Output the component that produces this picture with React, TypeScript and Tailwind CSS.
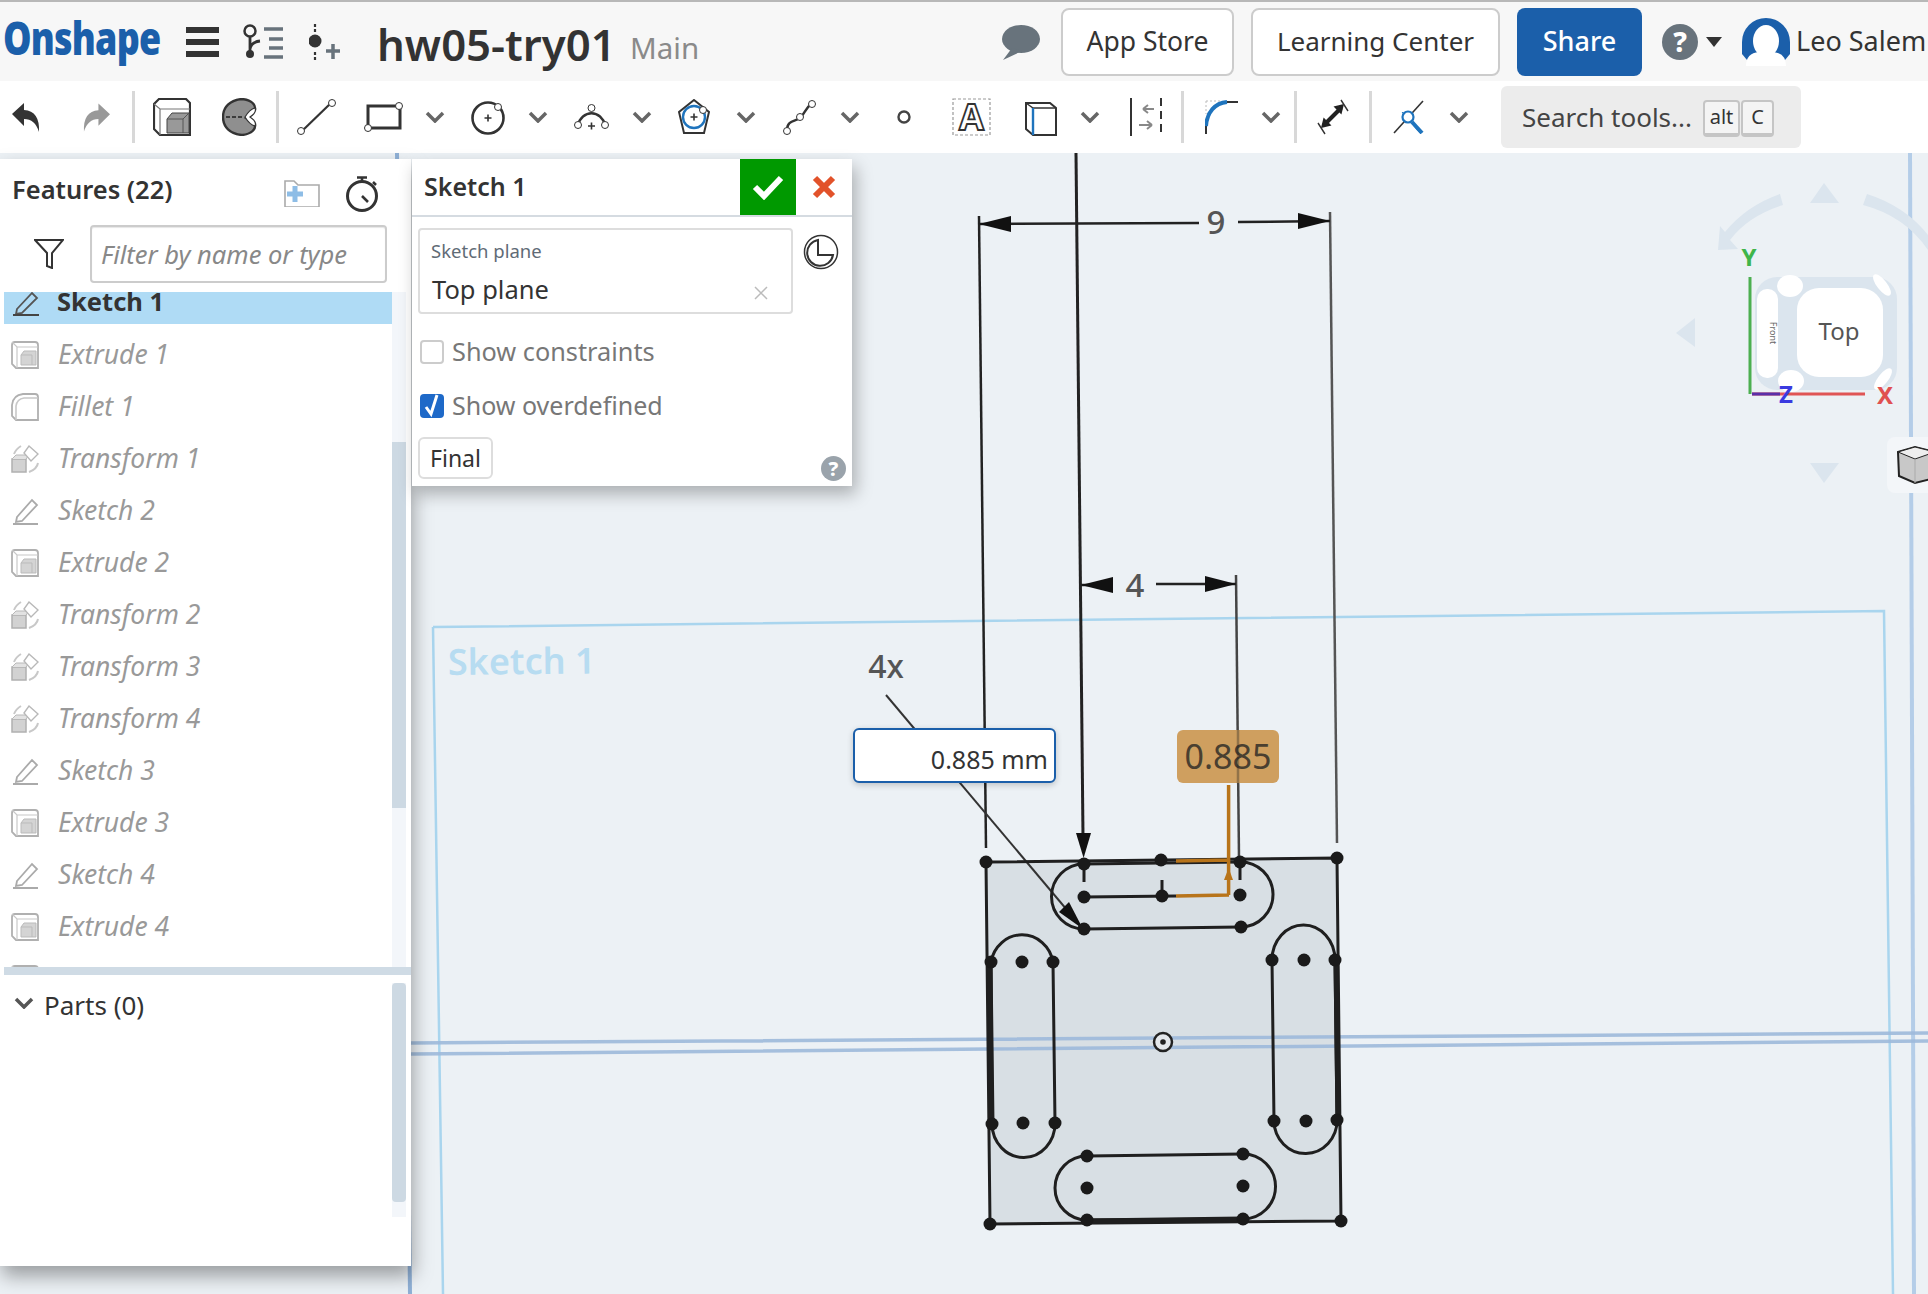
import React from "react";

const features = [
  { label: "Extrude 1", icon: "extrude" },
  { label: "Fillet 1", icon: "fillet" },
  { label: "Transform 1", icon: "transform" },
  { label: "Sketch 2", icon: "sketch" },
  { label: "Extrude 2", icon: "extrude" },
  { label: "Transform 2", icon: "transform" },
  { label: "Transform 3", icon: "transform" },
  { label: "Transform 4", icon: "transform" },
  { label: "Sketch 3", icon: "sketch" },
  { label: "Extrude 3", icon: "extrude" },
  { label: "Sketch 4", icon: "sketch" },
  { label: "Extrude 4", icon: "extrude" },
];

// white handle on the sketch tool icons
const Dot = ({ x, y, r = 3.5 }: { x: number; y: number; r?: number }) => (
  <circle cx={x} cy={y} r={r} fill="#fff" stroke="#333" strokeWidth="1" />
);

const Plus = ({ x, y }: { x: number; y: number }) => (
  <path d={`M${x - 3.5} ${y}H${x + 3.5}M${x} ${y - 3.5}V${y + 3.5}`} stroke="#333" strokeWidth="1.6" fill="none" />
);

const Chevron = ({ className }: { className: string }) => (
  <svg viewBox="0 0 20 12" className={`w-[20px] h-[12px] shrink-0 ${className}`}>
    <path d="M2 2L10 10L18 2" fill="none" stroke="#666" strokeWidth="3.5" />
  </svg>
);

const Sep = ({ className }: { className: string }) => (
  <div className={`w-[3px] h-[52px] bg-[#d8d8d8] shrink-0 ${className}`} />
);

const RowIcon = ({ kind }: { kind: string }) => {
  if (kind === "sketch-dark") {
    return (
      <svg viewBox="0 0 28 28" className="w-[28px] h-[28px]">
        <path d="M5 21L20 5L25 10L10 25L4 26Z" fill="none" stroke="#555" strokeWidth="1.8" />
        <path d="M1 27H27" stroke="#444" strokeWidth="2" />
      </svg>
    );
  }
  if (kind === "sketch") {
    return (
      <svg viewBox="0 0 28 28" className="w-[28px] h-[28px]">
        <path d="M6 20L21 3L26 8L11 24L5 25Z" fill="none" stroke="#aaa" strokeWidth="1.8" />
        <path d="M2 27H27" stroke="#aaa" strokeWidth="2" />
      </svg>
    );
  }
  if (kind === "fillet") {
    return (
      <svg viewBox="0 0 28 28" className="w-[28px] h-[28px]">
        <path d="M1 12Q2 2 12 1H24Q27 1 27 4V27H5L1 23Z" fill="none" stroke="#b0b0b0" strokeWidth="1.8" />
        <path d="M5 27V13Q6 6 13 5L27 5" fill="none" stroke="#c8c8c8" strokeWidth="1.6" />
      </svg>
    );
  }
  if (kind === "transform") {
    return (
      <svg viewBox="0 0 28 28" className="w-[28px] h-[28px]">
        <rect x="1" y="14" width="14" height="13" fill="#d2d2d2" stroke="#b0b0b0" strokeWidth="1.5" />
        <path d="M1 14L5 10H18L15 14" fill="#e2e2e2" stroke="#b8b8b8" strokeWidth="1" />
        <path d="M18 1L27 9L20 16L13 8Z" fill="#fff" stroke="#b8b8b8" strokeWidth="1.4" />
        <path d="M3 9Q5 4 10 1M27 18Q26 24 18 27" fill="none" stroke="#c8c8c8" strokeWidth="2" />
      </svg>
    );
  }
  return (
    <svg viewBox="0 0 28 28" className="w-[28px] h-[28px]">
      <path d="M1 4Q1 1 4 1H24Q27 1 27 4V27H5L1 23Z" fill="none" stroke="#b0b0b0" strokeWidth="1.8" />
      <path d="M1 1L6 6H27M6 6V27" fill="none" stroke="#c8c8c8" strokeWidth="1.2" />
      <path d="M10 14L13 10H25V24H10Z" fill="#d4d4d4" stroke="#bbb" strokeWidth="1" />
      <path d="M10 14H21V24" fill="none" stroke="#bbb" strokeWidth="1" />
    </svg>
  );
};

const Header = () => (
  <header className="h-[81px] shrink-0 bg-[#f7f7f7] border-t-2 border-[#b8b8b8] flex items-center overflow-hidden whitespace-nowrap">
    <div className="w-[183px] shrink-0 pl-[3px] -mt-[8px]">
      <span className="inline-block origin-left scale-x-[0.78] text-[46px] leading-none font-extrabold text-[#1b5faa] tracking-[-1px] [font-family:'Open_Sans',sans-serif]">
        Onshape
      </span>
    </div>
    <div className="w-[33px] h-[30px] ml-[3px] shrink-0 flex flex-col justify-between">
      <div className="h-[6px] bg-[#333]" />
      <div className="h-[6px] bg-[#333]" />
      <div className="h-[6px] bg-[#333]" />
    </div>
    <svg viewBox="0 0 41 35" className="w-[41px] h-[35px] ml-[23px] shrink-0">
      <circle cx="8" cy="7" r="5.5" fill="none" stroke="#333" strokeWidth="2.5" />
      <path d="M8 13V30M8 25Q9 18 18 17" fill="none" stroke="#333" strokeWidth="2.8" />
      <circle cx="8" cy="30" r="4" fill="#333" />
      <path d="M22 5H41M27 15H41M27 24H41M22 33H41" stroke="#68737c" strokeWidth="3.5" />
    </svg>
    <svg viewBox="0 0 31 36" className="w-[31px] h-[36px] ml-[26px] shrink-0">
      <path d="M6 0V8M6 28V36" stroke="#333" strokeWidth="2.2" strokeDasharray="3 2" />
      <circle cx="6" cy="17" r="6.5" fill="#333" />
      <path d="M17 27H31M24 20V35" stroke="#68737c" strokeWidth="3.5" />
    </svg>
    <div className="ml-[37px] text-[43.7px] leading-none font-semibold text-[#333] mt-[6px] w-[253px] shrink-0">hw05-try01</div>
    <div className="text-[29.5px] leading-none text-[#8a8a8a] mt-[12px] w-[370px] shrink-0">Main</div>
    <svg viewBox="0 0 40 36" className="w-[40px] h-[36px] shrink-0">
      <ellipse cx="21" cy="15" rx="19" ry="14" fill="#68737c" />
      <path d="M12 24L3 36L22 27Z" fill="#68737c" />
    </svg>
    <button className="ml-[21px] w-[173px] h-[68px] shrink-0 bg-white border-2 border-[#ccc] rounded-lg text-[26.5px] text-[#333]">App Store</button>
    <button className="ml-[17px] w-[249px] h-[68px] shrink-0 bg-white border-2 border-[#ccc] rounded-lg text-[26px] text-[#333]">Learning Center</button>
    <button className="ml-[17px] w-[125px] h-[68px] shrink-0 bg-[#1b5faa] rounded-lg text-[27px] font-medium text-white">Share</button>
    <svg viewBox="0 0 36 36" className="w-[36px] h-[36px] ml-[20px] shrink-0">
      <circle cx="18" cy="18" r="18" fill="#68737c" />
      <text x="18" y="28" textAnchor="middle" fontSize="28" fontWeight="800" fill="#fff">?</text>
    </svg>
    <svg viewBox="0 0 16 10" className="w-[16px] h-[10px] ml-[8px] shrink-0">
      <path d="M0 0H16L8 10Z" fill="#333" />
    </svg>
    <svg viewBox="0 0 48 48" className="w-[48px] h-[48px] ml-[20px] shrink-0">
      <path d="M0 24A24 24 0 0 1 48 24V36L38 48H10L0 36Z" fill="#1b5faa" />
      <ellipse cx="24" cy="23" rx="13" ry="16" fill="#fff" />
      <path d="M4 48Q4 35 17 34H31Q44 35 44 48Z" fill="#fff" />
    </svg>
    <div className="ml-[6px] text-[27px] text-[#333] shrink-0">Leo Salem</div>
  </header>
);

const Toolbar = () => (
  <div className="h-[72px] shrink-0 bg-white flex items-center pl-[12px] overflow-hidden">
    <svg viewBox="0 0 28 29" className="w-[28px] h-[29px] shrink-0">
      <path d="M0 11L12 0V7Q28 8 27 29Q23 16 12 16V23Z" fill="#333" />
    </svg>
    <svg viewBox="0 0 28 29" className="w-[27px] h-[29px] ml-[43px] shrink-0">
      <path d="M28 11L16 0V7Q0 8 1 29Q5 16 16 16V23Z" fill="#999" />
    </svg>
    <Sep className="ml-[22px]" />
    <svg viewBox="0 0 38 38" className="w-[38px] h-[38px] ml-[18px] shrink-0">
      <path d="M1 6L6 1H33L37 5V37H7L1 31Z" fill="#fff" stroke="#333" strokeWidth="2.2" />
      <path d="M1 6L7 11H37M7 11V37" fill="none" stroke="#777" strokeWidth="1.2" />
      <path d="M14 21L19 15H36V35H14Z" fill="#999" stroke="#444" strokeWidth="1" />
      <path d="M14 21H30L36 15M30 21V35" fill="none" stroke="#555" strokeWidth="1" />
    </svg>
    <svg viewBox="0 0 35 38" className="w-[35px] h-[38px] ml-[31px] shrink-0">
      <path d="M20 1C8 2 1 9 1 19C1 29 8 36 20 37C30 36 34 31 33 26C30 24 27 22 24 20C27 18 30 15 33 12C34 7 30 2 20 1Z" fill="#8f8f8f" stroke="#333" strokeWidth="2.4" />
      <path d="M33 10C29 11 26 14 23 19C26 24 29 27 33 28C35 24 31 21 28 19C31 17 35 14 33 10Z" fill="#fff" stroke="#333" strokeWidth="1.2" />
      <path d="M4 19H22" stroke="#222" strokeWidth="1.6" strokeDasharray="4 2" />
    </svg>
    <Sep className="ml-[19px]" />
    <svg viewBox="0 0 41 38" className="w-[41px] h-[38px] ml-[17px] shrink-0">
      <path d="M5 34L36 4" stroke="#333" strokeWidth="2.2" />
      <Dot x={5} y={33} />
      <Dot x={36} y={5} />
    </svg>
    <svg viewBox="0 0 40 30" className="w-[40px] h-[30px] ml-[27px] shrink-0">
      <rect x="4" y="4" width="32" height="22" fill="none" stroke="#333" strokeWidth="3" />
      <Dot x={35} y={4} />
      <Dot x={4} y={26} />
    </svg>
    <Chevron className="ml-[21px]" />
    <svg viewBox="0 0 34 36" className="w-[34px] h-[36px] ml-[26px] shrink-0">
      <circle cx="17" cy="19" r="15.5" fill="none" stroke="#333" strokeWidth="2.6" />
      <Plus x={17} y={19} />
      <Dot x={27} y={8} />
    </svg>
    <Chevron className="ml-[23px]" />
    <svg viewBox="0 0 35 32" className="w-[35px] h-[32px] ml-[26px] shrink-0">
      <path d="M4 24A14 16 0 0 1 31 24" fill="none" stroke="#333" strokeWidth="2.4" />
      <Dot x={4} y={24} />
      <Dot x={17.5} y={7} />
      <Dot x={31} y={24} />
      <Plus x={17.5} y={25} />
    </svg>
    <Chevron className="ml-[23px]" />
    <svg viewBox="0 0 32 36" className="w-[32px] h-[36px] ml-[26px] shrink-0">
      <path d="M16 1L31 13L26 34H6L1 13Z" fill="none" stroke="#333" strokeWidth="2" />
      <circle cx="16" cy="18" r="11" fill="none" stroke="#1f74bd" strokeWidth="2.4" />
      <Plus x={16} y={18} />
      <Dot x={25} y={11} />
    </svg>
    <Chevron className="ml-[26px]" />
    <svg viewBox="0 0 34 36" className="w-[34px] h-[36px] ml-[27px] shrink-0">
      <path d="M4 31C4 20 14 23 18 18C22 14 22 10 29 4" fill="none" stroke="#333" strokeWidth="2.4" />
      <Dot x={4} y={32} />
      <Dot x={17} y={18} />
      <Dot x={29} y={5} />
    </svg>
    <Chevron className="ml-[23px]" />
    <svg viewBox="0 0 14 14" className="w-[14px] h-[14px] ml-[37px] shrink-0">
      <circle cx="7" cy="7" r="5.5" fill="none" stroke="#444" strokeWidth="2.4" />
    </svg>
    <svg viewBox="0 0 39 38" className="w-[39px] h-[38px] ml-[41px] shrink-0 overflow-visible">
      <rect x="1" y="1" width="37" height="36" fill="none" stroke="#999" strokeWidth="1.2" strokeDasharray="3 2" />
      <text x="19.5" y="32" textAnchor="middle" fontSize="36" fontWeight="700" fill="#fff" stroke="#333" strokeWidth="1.8">A</text>
    </svg>
    <svg viewBox="0 0 32 38" className="w-[32px] h-[38px] ml-[34px] shrink-0">
      <path d="M1 5H25L31 10V37H8L1 31Z" fill="#fff" stroke="#333" strokeWidth="2" />
      <path d="M1 5L8 10H31" fill="none" stroke="#333" strokeWidth="1.4" />
      <path d="M8 10V37" stroke="#1f74bd" strokeWidth="2.4" />
    </svg>
    <Chevron className="ml-[23px]" />
    <svg viewBox="0 0 32 38" className="w-[32px] h-[38px] ml-[30px] shrink-0">
      <path d="M1 0V38" stroke="#333" strokeWidth="2" />
      <path d="M31 0V38" stroke="#333" strokeWidth="2" strokeDasharray="8 5" />
      <path d="M24 11H13M13 11L18 7M13 11L18 15" fill="none" stroke="#888" strokeWidth="2" />
      <path d="M9 27H22M22 27L17 23M22 27L17 31" fill="none" stroke="#888" strokeWidth="2" />
    </svg>
    <Sep className="ml-[19px]" />
    <svg viewBox="0 0 33 34" className="w-[33px] h-[34px] ml-[21px] shrink-0">
      <path d="M1 1H15M1 1V14" fill="none" stroke="#bbb" strokeWidth="1" strokeDasharray="2 2" />
      <path d="M1 34V26" stroke="#333" strokeWidth="2" />
      <path d="M1 26C2 12 10 3 22 2" fill="none" stroke="#1f74bd" strokeWidth="4" />
      <path d="M22 2H33" stroke="#333" strokeWidth="2" />
    </svg>
    <Chevron className="ml-[23px]" />
    <Sep className="ml-[13px]" />
    <svg viewBox="0 0 32 36" className="w-[32px] h-[36px] ml-[20px] shrink-0">
      <path d="M8 25L24 9" stroke="#222" strokeWidth="4" />
      <path d="M26 6L18 8L24 14ZM5 28L13 26L7 20Z" fill="#222" stroke="#222" strokeWidth="1.5" />
      <path d="M24 1L31 12M1 24L8 35" stroke="#333" strokeWidth="1.4" />
    </svg>
    <Sep className="ml-[20px]" />
    <svg viewBox="0 0 31 34" className="w-[31px] h-[34px] ml-[21px] shrink-0">
      <path d="M30 1L1 33" stroke="#333" strokeWidth="1.6" />
      <path d="M9 12L27 33" stroke="#1f74bd" strokeWidth="1" />
      <circle cx="15" cy="17" r="5.5" fill="#fff" stroke="#1f74bd" strokeWidth="2.2" />
      <path d="M19 22L29 33" stroke="#1f74bd" strokeWidth="4" />
    </svg>
    <Chevron className="ml-[25px]" />
    <div className="ml-[32px] w-[300px] h-[62px] shrink-0 bg-[#ececec] rounded-md flex items-center pl-[21px]">
      <span className="text-[26px] text-[#444] w-[181px] shrink-0 whitespace-nowrap">Search tools...</span>
      <span className="w-[37px] h-[37px] mt-[2px] flex items-center justify-center border-2 border-b-[4px] border-[#c5c5c5] rounded bg-[#f4f4f4] text-[20px] text-[#333]">alt</span>
      <span className="w-[33px] h-[37px] mt-[2px] ml-[1px] flex items-center justify-center border-2 border-b-[4px] border-[#c5c5c5] rounded bg-[#f4f4f4] text-[20px] text-[#333]">C</span>
    </div>
  </div>
);

const FeaturePanel = () => (
  <aside className="relative w-[411px] h-[1107px] mt-[6px] shrink-0 bg-white shadow-[2px_10px_18px_rgba(0,0,0,0.35)] flex flex-col">
    <div className="h-[66px] shrink-0 flex items-center pl-[12px]">
      <span className="text-[25.5px] font-semibold text-[#333] w-[272px] -mt-[5px]">Features (22)</span>
      <svg viewBox="0 0 36 27" className="w-[36px] h-[27px] mt-[3px] shrink-0">
        <path d="M10 1H1V27H35V5H14Z" fill="none" stroke="#aaa" strokeWidth="1.6" />
        <path d="M11 6V22M3 14H19" stroke="#8ebde6" strokeWidth="5" />
      </svg>
      <svg viewBox="0 0 32 36" className="w-[32px] h-[36px] ml-[26px] mt-[3px] shrink-0">
        <circle cx="16" cy="20" r="14.5" fill="none" stroke="#333" strokeWidth="3" />
        <path d="M11 1.5H21M16 2V6M27 6L30 9M16 20L22 26" fill="none" stroke="#333" strokeWidth="2.6" />
      </svg>
    </div>
    <div className="h-[58px] shrink-0 flex items-center">
      <svg viewBox="0 0 30 30" className="w-[30px] h-[30px] ml-[34px] shrink-0">
        <path d="M1 1H29L18 14V29L13 27V14Z" fill="none" stroke="#333" strokeWidth="2" />
      </svg>
      <div className="ml-[26px] w-[297px] h-[58px] border-2 border-[#ccc] rounded flex items-center pl-[9px] text-[25.5px] italic text-[#888] shadow-[inset_0_1px_1px_rgba(0,0,0,0.1)]">
        Filter by name or type
      </div>
    </div>
    <div className="mt-[9px] h-[675px] shrink-0 flex overflow-hidden">
      <div className="w-[392px] shrink-0">
        <div className="-mt-[16px] ml-[4px] h-[48px] mb-[4px] pt-[3px] bg-[#afdbf5] flex items-center pl-[8px]">
          <RowIcon kind="sketch-dark" />
          <span className="ml-[17px] text-[25.5px] font-bold text-[#333]">Sketch 1</span>
        </div>
        {features.map((f) => (
          <div key={f.label} className="ml-[4px] h-[48px] mb-[4px] pt-[5px] flex items-center pl-[7px]">
            <RowIcon kind={f.icon} />
            <span className="ml-[19px] text-[26.5px] italic text-[#999]">{f.label}</span>
          </div>
        ))}
        {/* next row, only the top of its icon shows above the divider */}
        <div className="ml-[4px] h-[48px] pt-[5px] flex items-center pl-[7px]">
          <RowIcon kind="extrude" />
        </div>
      </div>
      <div className="w-[14px] h-full bg-[#f3f6fa] pt-[150px] pb-[159px]">
        <div className="h-full bg-[#cdd9e3]" />
      </div>
    </div>
    <div className="h-[8px] ml-[4px] shrink-0 bg-[#cfdbe5]" />
    <div className="flex-1 flex">
      <div className="w-[392px] shrink-0 flex items-start pl-[14px] pt-[11px]">
        <svg viewBox="0 0 20 12" className="w-[20px] h-[12px] mt-[11px] shrink-0">
          <path d="M2 2L10 10L18 2" fill="none" stroke="#555" strokeWidth="3.5" />
        </svg>
        <span className="ml-[10px] text-[26px] text-[#333]">Parts (0)</span>
      </div>
      <div className="w-[14px] mt-[8px] h-[234px] bg-[#f3f6fa]">
        <div className="h-[219px] rounded bg-[#cdd9e3]" />
      </div>
    </div>
  </aside>
);

const SketchDialog = () => (
  <section className="w-[440px] h-[327px] ml-[1px] mt-[6px] shrink-0 bg-white shadow-[4px_8px_16px_rgba(0,0,0,0.28)] relative">
    <div className="h-[58px] border-b-2 border-[#d5dbe1] flex items-start">
      <div className="h-[56px] w-[328px] flex items-center pl-[12px] text-[25px] font-semibold text-[#333]">Sketch 1</div>
      <div className="w-[56px] h-[56px] bg-[#009900] flex items-center justify-center">
        <svg viewBox="0 0 32 26" className="w-[32px] h-[26px]">
          <path d="M3 13L12 22L29 4" fill="none" stroke="#fff" strokeWidth="6" />
        </svg>
      </div>
      <div className="w-[56px] h-[56px] flex items-center justify-center">
        <svg viewBox="0 0 24 24" className="w-[24px] h-[24px]">
          <path d="M3 3L21 21M21 3L3 21" fill="none" stroke="#e2522a" strokeWidth="6" />
        </svg>
      </div>
    </div>
    <div className="flex mt-[11px] ml-[6px]">
      <div className="relative w-[375px] h-[86px] border-2 border-[#ddd] rounded pl-[11px]">
        <div className="text-[18.5px] text-[#5f6b76] mt-[9px] leading-[24px]">Sketch plane</div>
        <div className="text-[25.5px] text-[#333] mt-[9px] ml-[1px] leading-[34px]">Top plane</div>
        <svg viewBox="0 0 14 14" className="absolute right-[23px] top-[56px] w-[14px] h-[14px]">
          <path d="M1 1L13 13M13 1L1 13" stroke="#bbb" strokeWidth="1.5" />
        </svg>
      </div>
      <svg viewBox="0 0 36 36" className="w-[36px] h-[36px] ml-[10px] mt-[6px] shrink-0">
        <circle cx="18" cy="18" r="16.5" fill="none" stroke="#333" strokeWidth="1.5" />
        <path d="M15 6A13 13 0 1 0 30 21H15Z" fill="none" stroke="#333" strokeWidth="2" />
      </svg>
    </div>
    <div className="flex items-center h-[24px] mt-[26px] ml-[8px]">
      <div className="w-[24px] h-[24px] rounded border-2 border-[#ccc]" />
      <span className="ml-[8px] text-[25.3px] text-[#777]">Show constraints</span>
    </div>
    <div className="flex items-center h-[24px] mt-[30px] ml-[8px]">
      <div className="w-[24px] h-[24px] rounded bg-[#1e69c8] flex items-center justify-center">
        <svg viewBox="0 0 24 24" className="w-[24px] h-[24px]">
          <path d="M6 13L11 20L17 1" fill="none" stroke="#fff" strokeWidth="3" />
        </svg>
      </div>
      <span className="ml-[8px] text-[25px] text-[#777]">Show overdefined</span>
    </div>
    <button className="block w-[75px] h-[42px] mt-[19px] ml-[6px] border-2 border-[#ddd] rounded-md text-[23px] text-[#333]">Final</button>
    <svg viewBox="0 0 25 25" className="absolute right-[6px] bottom-[5px] w-[25px] h-[25px]">
      <circle cx="12.5" cy="12.5" r="12.5" fill="#9aa3ab" />
      <text x="12.5" y="20" textAnchor="middle" fontSize="20" fontWeight="800" fill="#fff">?</text>
    </svg>
  </section>
);

// the sketch in the graphics area, drawn in page coordinates
const Point = ({ x, y }: { x: number; y: number }) => <circle cx={x} cy={y} r="6.5" fill="#1a1a1a" />;

const Drawing = () => (
  <svg viewBox="0 153 1928 1141" className="absolute inset-0 w-[1928px] h-[1141px]">
    <path d="M433 627L1884 611L1893 1294M433 627L443 1294" fill="none" stroke="#a9d5ee" strokeWidth="2.5" />
    <path d="M397 153L410 1294" stroke="#8fb0d6" strokeWidth="4" />
    <path d="M1910 153L1914 1294" stroke="#b4cde8" strokeWidth="4" />
    <text x="448" y="675" fontSize="36" fontWeight="600" fill="#b7dcf1" transform="rotate(-0.6 448 675)">Sketch 1</text>

    <path d="M986 862L1337 858L1341 1221L990 1224Z" fill="#d8dfe4" />
    <path d="M411 1043L1928 1033M411 1054L1928 1041" fill="none" stroke="#9db9da" strokeWidth="3.5" opacity="0.9" />

    <g stroke="#222" fill="none">
      <path d="M979 216L986 848" strokeWidth="2.5" />
      <path d="M1330 212L1337 843" strokeWidth="2.5" stroke="#555" />
      <path d="M1076 153L1083 836" strokeWidth="3" />
      <path d="M1236 575L1239 858" strokeWidth="2.5" stroke="#444" />
      <path d="M979 224L1199 223M1238 222L1330 221M1081 585L1113 585M1156 584L1236 584" strokeWidth="2.5" />
      <path d="M886 695L1083 929" strokeWidth="2" stroke="#333" />
    </g>
    <g fill="#111">
      <path d="M979 224L1011 216V232Z" />
      <path d="M1330 221L1298 213V229Z" />
      <path d="M1081 585L1113 577V593Z" />
      <path d="M1236 584L1205 576V592Z" />
      <path d="M1083.6 858L1076 833H1091Z" />
      <path d="M1083 929L1059 912L1069 902Z" />
    </g>
    <text x="1216" y="234" textAnchor="middle" fontSize="33" fontWeight="500" fill="#555">9</text>
    <text x="1135" y="597" textAnchor="middle" fontSize="33" fontWeight="500" fill="#555">4</text>
    <text x="886" y="678" textAnchor="middle" fontSize="32" fontWeight="500" fill="#555">4x</text>

    <rect x="1177" y="730" width="102" height="53" rx="6" fill="#cf9f5f" />
    <text x="1228" y="769" textAnchor="middle" fontSize="34" fill="#4a3f30">0.885</text>
    <path d="M1238 730V783" stroke="#222" strokeWidth="2.5" opacity="0.35" />

    <g fill="none" stroke="#1f1f1f" strokeWidth="3">
      <path d="M986 862L1337 858L1341 1221L990 1224Z" />
      <path d="M1084 864L1240 862A32.5 32.5 0 0 1 1241 927L1084 929A32.5 32.5 0 0 1 1084 864Z" />
      <path d="M991 962A31.5 33 0 0 1 1053 962L1055 1123A31.5 34 0 0 1 992 1124Z" />
      <path d="M1272 960A31.5 35 0 0 1 1335 960L1337 1120A31.5 33 0 0 1 1274 1121Z" />
      <path d="M1087 1156L1243 1154A32.5 32.5 0 0 1 1243 1219L1087 1220A32 32 0 0 1 1087 1156Z" />
      <path d="M1084 897L1176 896M1084 864V882M1240 862V880M1162 880V896" />
      <path d="M990 962L992 1124M1336 960L1338 1120M1087 1221L1243 1219" strokeWidth="5" />
    </g>
    <g fill="none" stroke="#b8741a" strokeWidth="3.5">
      <path d="M1176 861L1229 860M1176 896L1229 895M1228.6 785V895" />
    </g>
    <path d="M1228.6 868L1224 880H1233Z" fill="#b8741a" />

    {[
      [986, 862], [1337, 858], [990, 1224], [1341, 1221],
      [1084, 864], [1240, 862], [1084, 929], [1241, 927], [1084, 897], [1240, 895], [1161, 860], [1162, 896],
      [991, 962], [1053, 962], [1022, 962], [992, 1124], [1055, 1123], [1023, 1123],
      [1272, 960], [1335, 960], [1304, 960], [1274, 1121], [1337, 1120], [1306, 1121],
      [1087, 1156], [1243, 1154], [1087, 1188], [1243, 1186], [1087, 1220], [1243, 1219],
    ].map(([x, y]) => (
      <Point key={`${x}-${y}`} x={x} y={y} />
    ))}
    <circle cx="1163" cy="1042" r="9" fill="#e4e8ec" stroke="#222" strokeWidth="2.5" />
    <circle cx="1163" cy="1042" r="2.8" fill="#222" />

    {/* view cube */}
    <g fill="#dbe5ee">
      <path d="M1824 183L1810 203H1839Z" />
      <path d="M1810 463H1839L1824 483Z" />
      <path d="M1695 318V347L1676 333Z" />
      <path d="M1783 205Q1748 216 1730 240L1738 249L1718 250L1720 226L1725 232Q1746 206 1780 194Z" />
      <path d="M1867 194Q1905 206 1928 235V250Q1905 216 1863 205Z" />
      <rect x="1755" y="277" width="142" height="113" rx="22" />
    </g>
    <g fill="#fff">
      <rect x="1797" y="288" width="86" height="89" rx="22" />
      <rect x="1757" y="289" width="21" height="89" rx="10" />
      <ellipse cx="1790" cy="286" rx="13" ry="11" />
      <ellipse cx="1791" cy="381" rx="13" ry="11" />
      <ellipse cx="1882" cy="285" rx="5" ry="13" transform="rotate(-38 1882 285)" />
      <ellipse cx="1883" cy="379" rx="5" ry="13" transform="rotate(38 1883 379)" />
    </g>
    <text x="1839" y="340" textAnchor="middle" fontSize="24" fill="#555">Top</text>
    <text x="0" y="0" textAnchor="middle" fontSize="9" fill="#666" transform="translate(1770 333) rotate(90)">Front</text>
    <path d="M1750 277V394" stroke="#4caf50" strokeWidth="3" />
    <path d="M1752 394H1865" stroke="#e05555" strokeWidth="3" />
    <path d="M1752 394H1780" stroke="#5a2fa8" strokeWidth="3" />
    <text x="1749" y="266" textAnchor="middle" fontSize="24" fontWeight="700" fill="#3fb54a">Y</text>
    <text x="1786" y="403" textAnchor="middle" fontSize="24" fontWeight="700" fill="#3a3ae0">Z</text>
    <text x="1885" y="404" textAnchor="middle" fontSize="24" fontWeight="700" fill="#e05050">X</text>

    <rect x="1887" y="437" width="60" height="56" rx="8" fill="#f3f6f9" />
    <path d="M1898 452L1915 447L1935 452V478L1915 483L1899 476Z" fill="#c8c8c8" stroke="#222" strokeWidth="2" />
    <path d="M1898 452L1915 459L1935 452L1915 447Z" fill="#eee" stroke="#222" strokeWidth="1" />
    <path d="M1915 459V483" stroke="#aaa" strokeWidth="1" />
  </svg>
);

export default function App() {
  return (
    <div className="w-[1928px] h-[1294px] flex flex-col overflow-hidden [font-family:'Noto_Sans',sans-serif] bg-[#ecf1f5]">
      <Header />
      <Toolbar />
      <main className="relative flex-1 flex items-start">
        <Drawing />
        <div className="relative flex items-start">
          <FeaturePanel />
          <SketchDialog />
        </div>
        <input
          readOnly
          value="0.885 mm"
          className="absolute left-[853px] top-[575px] w-[203px] h-[55px] bg-white border-2 border-[#1b5faa] rounded-md text-right pr-[6px] pt-[6px] text-[25px] text-[#333] shadow-[0_2px_6px_rgba(0,0,0,0.2)] outline-none"
        />
      </main>
    </div>
  );
}
